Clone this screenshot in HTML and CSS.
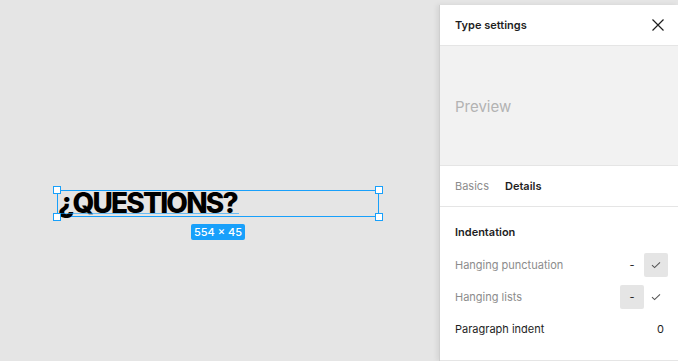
FILE: index.html
```html
<!DOCTYPE html>
<html>
<head>
<meta charset="utf-8">
<link rel="stylesheet" href="styles.css">
</head>
<body>
<div class="app">
  <div class="canvas">
    <div class="frame">
      <span class="text">¿QUESTIONS?</span>
      <span class="baseline"></span>
      <span class="handle tl"></span>
      <span class="handle tr"></span>
      <span class="handle bl"></span>
      <span class="handle br"></span>
    </div>
    <div class="dims">554 × 45</div>
  </div>
  <aside class="panel">
    <header class="head">
      <span class="title">Type settings</span>
      <svg class="close" width="12" height="12" viewBox="0 0 12 12"><path d="M0.5 0.5L11.5 11.5M11.5 0.5L0.5 11.5" stroke="#1e1e1e" stroke-width="1.2" fill="none"/></svg>
    </header>
    <div class="preview">Preview</div>
    <nav class="tabs">
      <span class="tab">Basics</span>
      <span class="tab active">Details</span>
    </nav>
    <section class="section">
      <div class="section-title">Indentation</div>
      <div class="row">
        <span class="label muted">Hanging punctuation</span>
        <div class="controls">
          <span class="slot">-</span>
          <span class="slot on"><svg width="10" height="8" viewBox="0 0 10 8"><path d="M1 4.2L3.6 6.6L9 1.4" stroke="#555" stroke-width="1.1" fill="none"/></svg></span>
        </div>
      </div>
      <div class="row">
        <span class="label muted">Hanging lists</span>
        <div class="controls">
          <span class="slot on">-</span>
          <span class="slot"><svg width="10" height="8" viewBox="0 0 10 8"><path d="M1 4.2L3.6 6.6L9 1.4" stroke="#555" stroke-width="1.1" fill="none"/></svg></span>
        </div>
      </div>
      <div class="row">
        <span class="label">Paragraph indent</span>
        <div class="controls">
          <span class="value">0</span>
        </div>
      </div>
    </section>
  </aside>
</div>
</body>
</html>
```

FILE: styles.css
```css
* { box-sizing: border-box; }
html, body { margin: 0; padding: 0; }
body {
  width: 678px;
  height: 361px;
  overflow: hidden;
  background: #e5e5e5;
  font-family: Inter, "Noto Sans", sans-serif;
  font-size: 11px;
  color: #1e1e1e;
}
.app {
  display: flex;
  height: 361px;
}
.canvas {
  position: relative;
  flex: 1;
}
.frame {
  position: absolute;
  left: 57px;
  top: 190px;
  width: 322px;
  height: 27px;
  border: 1px solid #18a0fb;
}
.text {
  position: absolute;
  left: 0px;
  top: -5px;
  font-family: Inter, sans-serif;
  font-weight: 800;
  font-size: 28px;
  letter-spacing: -1.8px;
  line-height: 34px;
  color: #000;
  white-space: nowrap;
}
.baseline {
  position: absolute;
  left: 0;
  top: 22px;
  width: 181px;
  height: 1px;
  background: #18a0fb;
  opacity: 0.6;
}
.handle {
  position: absolute;
  width: 8px;
  height: 8px;
  background: #fff;
  border: 1px solid #18a0fb;
}
.tl { left: -5px; top: -5px; }
.tr { right: -5px; top: -5px; }
.bl { left: -5px; bottom: -5px; }
.br { right: -5px; bottom: -5px; }
.dims {
  position: absolute;
  left: 191px;
  top: 224px;
  width: 54px;
  height: 16px;
  background: #18a0fb;
  color: #fff;
  border-radius: 2px;
  font-size: 11px;
  font-weight: 500;
  line-height: 16px;
  text-align: center;
}
.panel {
  width: 239px;
  margin-top: 5px;
  background: #fff;
  border-left: 1px solid #cfcfcf;
  box-shadow: -2px 0 5px rgba(0,0,0,0.08);
  display: flex;
  flex-direction: column;
}
.head {
  height: 41px;
  flex: none;
  display: flex;
  align-items: center;
  justify-content: space-between;
  padding: 0 14px 0 15px;
  border-bottom: 1px solid #e5e5e5;
}
.title {
  font-weight: 600;
  font-size: 11px;
}
.close { display: block; }
.preview {
  height: 120px;
  flex: none;
  background: #f2f2f2;
  display: flex;
  align-items: center;
  padding: 2px 0 0 15px;
  font-size: 15px;
  color: #b3b3b3;
  border-bottom: 1px solid #e5e5e5;
}
.tabs {
  height: 41px;
  flex: none;
  display: flex;
  align-items: center;
  gap: 16px;
  padding-left: 15px;
  border-bottom: 1px solid #e5e5e5;
}
.tab { color: #8c8c8c; }
.tab.active { color: #1e1e1e; font-weight: 600; }
.section {
  padding: 9px 0 15px 0;
  border-bottom: 1px solid #e5e5e5;
}
.section-title {
  height: 33px;
  display: flex;
  align-items: center;
  padding: 0 0 2px 15px;
  font-weight: 600;
}
.row {
  height: 32px;
  display: flex;
  align-items: center;
  justify-content: space-between;
  padding: 0 10px 0 15px;
}
.label.muted { color: #8c8c8c; }
.controls {
  display: flex;
  align-items: center;
}
.slot {
  width: 24px;
  height: 24px;
  display: flex;
  align-items: center;
  justify-content: center;
  border-radius: 2px;
  color: #1e1e1e;
}
.slot.on { background: #e5e5e5; }
.value {
  width: 24px;
  text-align: right;
  padding-right: 4px;
}
```
